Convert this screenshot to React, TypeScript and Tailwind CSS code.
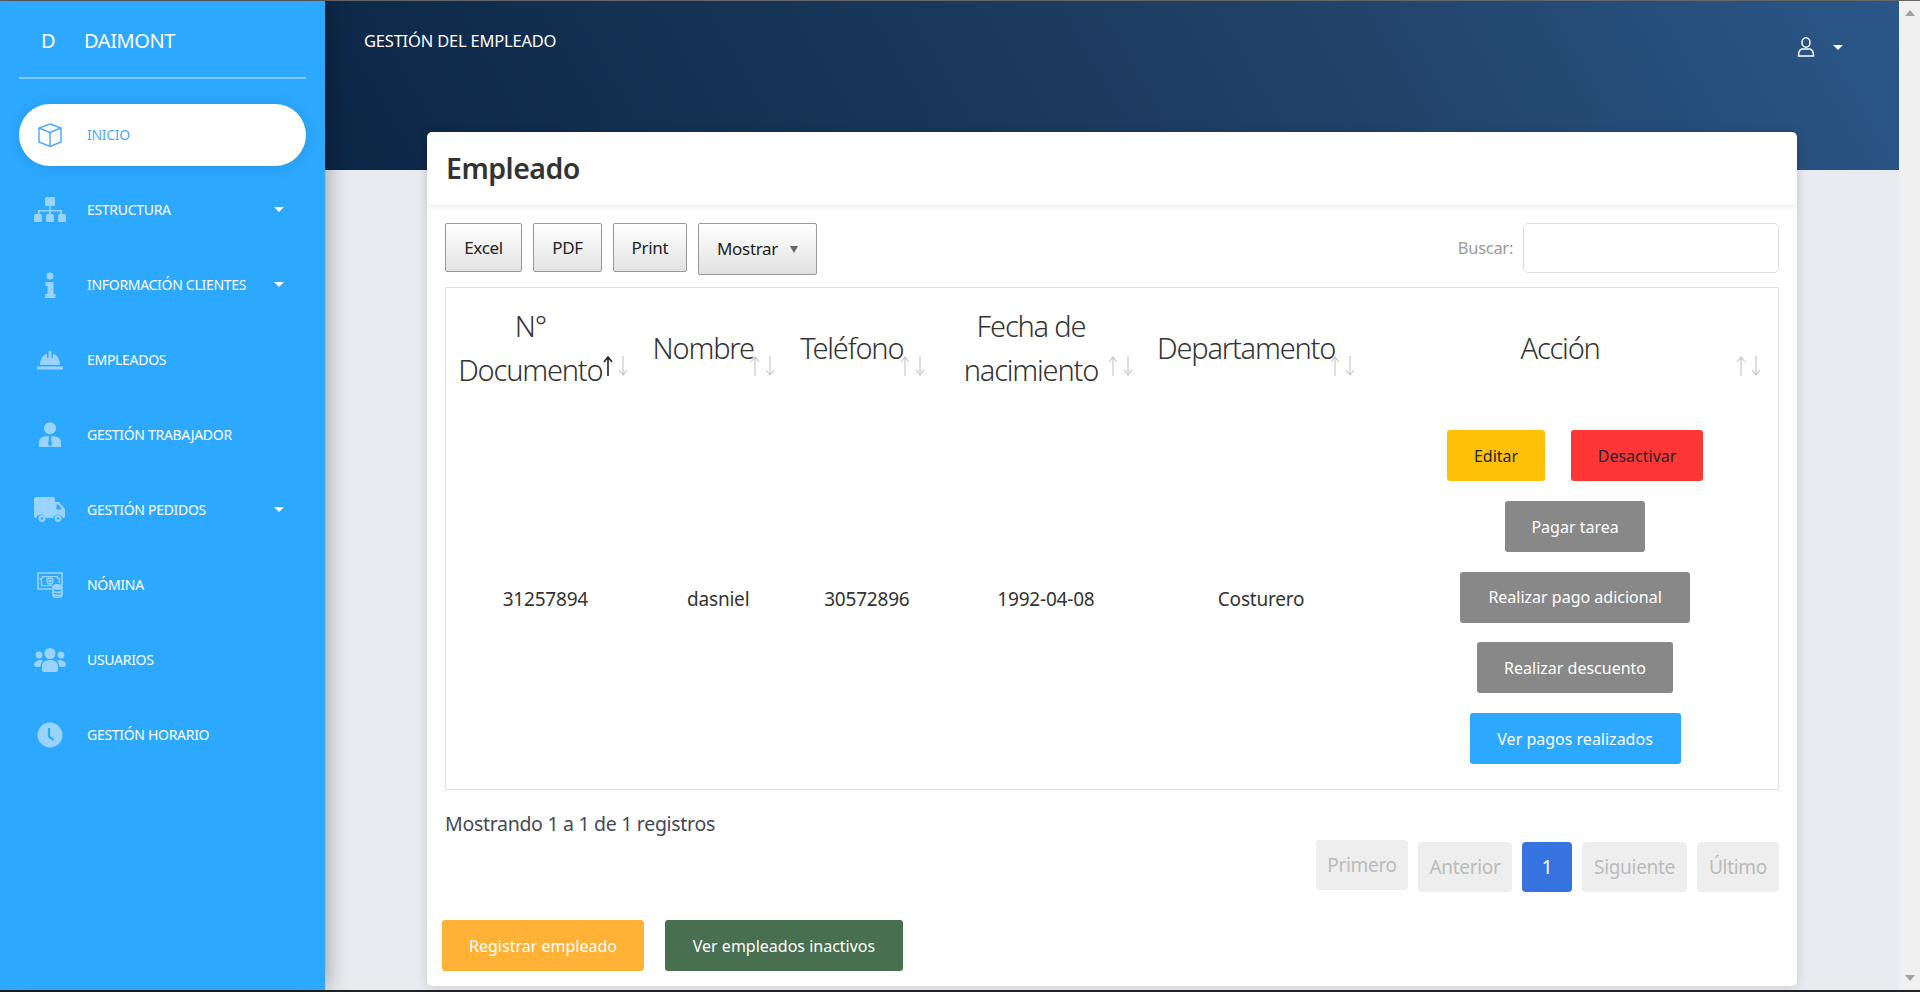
import { ReactNode } from 'react';

const ui = "font-['Noto_Sans',sans-serif]";

function CubeIcon() {
  return (
    <svg width="26" height="26" viewBox="0 0 26 26" fill="none" stroke="currentColor" strokeWidth="1.5">
      <path d="M13 2 L24 6 V20 L13 24.5 L2 20 V6 Z" />
      <path d="M2 6 L13 10.5 L24 6 M13 10.5 V24.5" />
    </svg>
  );
}

function HierarchyIcon() {
  return (
    <svg width="32" height="26" viewBox="0 0 32 26" fill="currentColor">
      <rect x="11" y="0" width="10" height="9" rx="1.5" />
      <path d="M15.2 9h1.6v4H28v5h-1.6v-3.4H16.8V18h-1.6v-3.4H5.6V18H4v-5h11.2z" />
      <rect x="0" y="17" width="8" height="8" rx="1.5" />
      <rect x="12" y="17" width="8" height="8" rx="1.5" />
      <rect x="24" y="17" width="8" height="8" rx="1.5" />
    </svg>
  );
}

function InfoIcon() {
  return (
    <svg width="12" height="26" viewBox="0 0 12 26" fill="currentColor">
      <circle cx="6" cy="4" r="3.6" />
      <path d="M1.5 10h8v12h2v4H1v-4h2.5v-8H1.5z" />
    </svg>
  );
}

function HelmetIcon() {
  return (
    <svg width="26" height="20" viewBox="0 0 26 20" fill="currentColor">
      <path d="M3 15C3 9 6 5 10 3.6V8h1.6V1h2.8v7H16V3.6C20 5 23 9 23 15z" />
      <rect x="0" y="16.5" width="26" height="3" />
    </svg>
  );
}

function WorkerIcon() {
  return (
    <svg width="24" height="26" viewBox="0 0 24 26" fill="currentColor">
      <circle cx="12" cy="6.2" r="6" />
      <path d="M8 14.2 L10.6 14 L11 17 L10 22 L12 25 L14 22 L13 17 L13.4 14 L16 14.2 C20 14.6 23 16.4 23 20 V25 H1 V20 C1 16.4 4 14.6 8 14.2Z" />
    </svg>
  );
}

function TruckIcon() {
  return (
    <svg width="32" height="26" viewBox="0 0 32 26" fill="currentColor">
      <path d="M2 0h17c1 0 2 1 2 2v3h4l6 7v7c0 1-.5 2-1 2h-1.200a5 5 0 0 0-9.600 0h-7.400a5 5 0 0 0-9.600 0H1.500C.500 21 0 20 0 19V2C0 1 1 0 2 0z" />
      <path d="M22.500 7.500v5H28l-3.600-5z" fill="#2ca8ff" />
      <circle cx="8" cy="21.500" r="3.400" />
      <circle cx="24" cy="21.500" r="3.400" />
      <circle cx="8" cy="21.500" r="1.300" fill="#2ca8ff" />
      <circle cx="24" cy="21.500" r="1.300" fill="#2ca8ff" />
    </svg>
  );
}

function PayrollIcon() {
  return (
    <svg width="26" height="26" viewBox="0 0 26 26" fill="none" stroke="currentColor" strokeWidth="1.4">
      <path d="M15 17H1V1h24v12" strokeWidth="1.6" />
      <path d="M15 13.600H4.500V10C4.500 8 3.600 7 3.600 7c1.400 0 2-1 2-2.400h14.600c0 1.400.800 2.400 2.200 2.400v4" />
      <circle cx="13" cy="9" r="3" />
      <circle cx="13" cy="9" r="1" fill="currentColor" />
      <ellipse cx="20.500" cy="15" rx="4.600" ry="2.200" fill="currentColor" />
      <path d="M16 15v8c0 1.300 2 2.400 4.500 2.400S25 24.300 25 23v-8M16 18c0 1.300 2 2.400 4.500 2.400S25 19.300 25 18M16 21c0 1.300 2 2.400 4.500 2.400S25 22.300 25 21" strokeWidth="1.600" />
    </svg>
  );
}

function UsersIcon() {
  return (
    <svg width="32" height="24" viewBox="0 0 32 24" fill="currentColor">
      <circle cx="16" cy="5.500" r="5.500" />
      <path d="M16 12c5 0 8 2.500 8 6v4c0 1-1 2-2 2H10c-1 0-2-1-2-2v-4c0-3.500 3-6 8-6z" />
      <circle cx="5" cy="7" r="3.400" />
      <circle cx="27" cy="7" r="3.400" />
      <path d="M7.500 12C4 12 0 13.500 0 16.500c0 1.500 1 2.500 2.500 2.500h4c.2-3 1.200-5.300 3-6.500-.6-.3-1.200-.5-2-.5zM24.500 12c3.500 0 7.500 1.500 7.500 4.500 0 1.500-1 2.500-2.500 2.500h-4c-.2-3-1.200-5.300-3-6.500.6-.3 1.200-.5 2-.5z" />
    </svg>
  );
}

function ClockIcon() {
  return (
    <svg width="26" height="26" viewBox="0 0 26 26">
      <circle cx="13" cy="13" r="12.500" fill="currentColor" />
      <path d="M12 6v8.500l4.500 3.500" fill="none" stroke="#2ca8ff" strokeWidth="2.200" />
    </svg>
  );
}

function UserOutline() {
  return (
    <svg width="18" height="20" viewBox="0 0 18 20" fill="none" stroke="white" strokeWidth="1.500">
      <ellipse cx="9" cy="5.500" rx="4" ry="4.700" />
      <path d="M5 12 H13 C15 12.500 16.500 15 16.500 19 H1.500 C1.500 15 3 12.500 5 12Z" />
    </svg>
  );
}

function Caret() {
  return <span className="h-0 w-0 border-x-[5px] border-t-[5px] border-x-transparent border-t-white" />;
}

const menu: { label: string; icon: ReactNode; caret?: boolean }[] = [
  { label: 'Estructura', icon: <HierarchyIcon />, caret: true },
  { label: 'Información clientes', icon: <InfoIcon />, caret: true },
  { label: 'Empleados', icon: <HelmetIcon /> },
  { label: 'Gestión trabajador', icon: <WorkerIcon /> },
  { label: 'Gestión pedidos', icon: <TruckIcon />, caret: true },
  { label: 'Nómina', icon: <PayrollIcon /> },
  { label: 'Usuarios', icon: <UsersIcon /> },
  { label: 'Gestión horario', icon: <ClockIcon /> },
];

function Sidebar() {
  return (
    <aside className="relative z-10 flex w-[325px] shrink-0 flex-col bg-[#2ca8ff] shadow-[0_0_22px_rgba(0,0,0,0.4)]">
      <div className="mx-[19px] flex h-[78px] items-center border-b-2 border-[#80c9ff] pt-[3px] text-white">
        <span className="ml-[22px] w-[43px] text-[20px]">D</span>
        <span className="text-[20px] tracking-[-0.4px]">DAIMONT</span>
      </div>
      <nav className="mt-[25px] flex flex-col">
        <a className="mx-[19px] flex h-[62px] items-center rounded-[31px] bg-white text-[#4fa9fb] shadow-[0_1px_15px_rgba(0,0,0,0.1)]">
          <span className="flex w-[68px] justify-center pr-[6px]">
            <CubeIcon />
          </span>
          <span className="pb-[2px] text-[14px] uppercase tracking-[-0.3px]">Inicio</span>
        </a>
        <div className="mt-[6px] flex flex-col">
          {menu.map((item) => (
            <a key={item.label} className="flex h-[75px] items-center pl-[19px] text-white">
              <span className="flex w-[68px] justify-center pr-[6px] text-[#99d3ff]">{item.icon}</span>
              <span className="text-[14px] uppercase tracking-[-0.3px]">{item.label}</span>
              {item.caret && (
                <span className="ml-auto mr-[41px] flex">
                  <Caret />
                </span>
              )}
            </a>
          ))}
        </div>
      </nav>
    </aside>
  );
}

function SortArrows({ dark }: { dark?: boolean }) {
  return (
    <span className="absolute bottom-[34px] right-[17px] flex gap-[5px]">
      <svg width="10" height="20" viewBox="0 0 10 20" fill="none" stroke={dark ? '#222222' : '#c8c8c8'} strokeWidth={dark ? 1.6 : 1.2}>
        <path d="M5 20V1M1 6l4-5 4 5" />
      </svg>
      <svg width="10" height="20" viewBox="0 0 10 20" fill="none" stroke="#c8c8c8" strokeWidth="1.2">
        <path d="M5 0v19M1 14l4 5 4-5" />
      </svg>
    </span>
  );
}

const headers = [
  { label: 'N° Documento', width: 'w-[199px]', pad: 'px-[6px]' },
  { label: 'Nombre', width: 'w-[147px]', pad: '' },
  { label: 'Teléfono', width: 'w-[150px]', pad: '' },
  { label: 'Fecha de nacimiento', width: 'w-[208px]', pad: '' },
  { label: 'Departamento', width: 'w-[222px]', pad: '' },
  { label: 'Acción', width: 'w-[406px]', pad: '' },
];

function ActionButton({ className, children }: { className: string; children: ReactNode }) {
  return (
    <button className={`flex h-[51px] items-center justify-center rounded-[3px] text-[16px] ${className}`}>
      {children}
    </button>
  );
}

function EmployeeTable() {
  return (
    <table className="mt-[12px] w-[1334px] table-fixed border-collapse border border-[#dee2e6]">
      <thead>
        <tr className="h-[122px]">
          {headers.map((h, i) => (
            <th
              key={h.label}
              className={`relative ${h.width} pb-[2px] pr-[30px] text-center text-[29px] font-light leading-[44px] tracking-[-1.2px] text-[#333333]`}
            >
              <span className={`block ${h.pad}`}>{h.label}</span>
              <SortArrows dark={i === 0} />
            </th>
          ))}
        </tr>
      </thead>
      <tbody>
        <tr className="h-[380px] text-center text-[19px] tracking-[-0.2px] text-[#333333]">
          <td className="pb-[1px]">31257894</td>
          <td className="pb-[1px]">dasniel</td>
          <td className="pb-[1px]">30572896</td>
          <td className="pb-[1px]">1992-04-08</td>
          <td className="pb-[1px]">Costurero</td>
          <td>
            <div className="flex flex-col items-center gap-[19.7px] pb-[4px] tracking-normal">
              <div className="flex gap-[26px]">
                <ActionButton className="w-[98px] bg-[#ffc107] text-[#212529]">Editar</ActionButton>
                <ActionButton className="w-[132px] bg-[#ff3636] text-[#212529]">Desactivar</ActionButton>
              </div>
              <ActionButton className="w-[140px] bg-[#888888] text-white">Pagar tarea</ActionButton>
              <ActionButton className="w-[230px] bg-[#888888] text-white">Realizar pago adicional</ActionButton>
              <ActionButton className="w-[196px] bg-[#888888] text-white">Realizar descuento</ActionButton>
              <ActionButton className="w-[211px] bg-[#2ca8ff] text-white">Ver pagos realizados</ActionButton>
            </div>
          </td>
        </tr>
      </tbody>
    </table>
  );
}

function ToolButton({ className, children }: { className: string; children: ReactNode }) {
  return (
    <button
      className={`flex items-center justify-center rounded-[2px] border border-[#999999] bg-gradient-to-b from-white to-[#e2e2e2] text-[17px] tracking-[-0.3px] text-[#222222] ${className}`}
    >
      {children}
    </button>
  );
}

const pages = [
  { label: 'Anterior', width: 'w-[94px]' },
  { label: '1', width: 'w-[50px]', active: true },
  { label: 'Siguiente', width: 'w-[105px]' },
  { label: 'Último', width: 'w-[82px]' },
];

export default function App() {
  return (
    <div className={`flex h-[992px] w-[1920px] flex-col overflow-hidden bg-[#e9ebf0] ${ui}`}>
      <div className="h-px bg-[#666666]" />
      <div className="flex min-h-0 flex-1">
        <Sidebar />
        <main className="flex min-w-0 flex-1 flex-col">
          <header className="flex h-[169px] shrink-0 items-start justify-between bg-[linear-gradient(60deg,#0c2646_0%,#204065_60%,#2a5788_100%)] pl-[39px] pr-[56px] text-white">
            <h2 className="mt-[29px] text-[16.5px] uppercase leading-[22px] tracking-[-0.2px]">Gestión del empleado</h2>
            <div className="mt-[36px] flex items-center gap-[18px]">
              <UserOutline />
              <Caret />
            </div>
          </header>
          <section className="relative mx-[102px] -mt-[38px] h-[854px] rounded-[5px] bg-white px-[18px] shadow-[0_1px_12px_rgba(0,0,0,0.14)]">
            <div className="-mx-[18px] flex h-[73px] items-center rounded-t-[5px] px-[19px] shadow-[0_2px_4px_rgba(0,0,0,0.08)]">
              <h1 className="text-[28.5px] font-semibold tracking-[-0.5px] text-[#333333]">Empleado</h1>
            </div>
            <div className="mt-[18px] flex items-start">
              <div className="flex items-start gap-[11px]">
                <ToolButton className="h-[49px] w-[77px]">Excel</ToolButton>
                <ToolButton className="h-[49px] w-[69px]">PDF</ToolButton>
                <ToolButton className="h-[49px] w-[74px]">Print</ToolButton>
                <ToolButton className="h-[52px] w-[119px] gap-[12px]">
                  Mostrar
                  <span className="h-0 w-0 border-x-[4px] border-t-[7px] border-x-transparent border-t-[#666666]" />
                </ToolButton>
              </div>
              <label className="ml-auto flex items-center gap-[10px] text-[16.5px] tracking-[-0.3px] text-[#999999]">
                Buscar:
                <input className="h-[50px] w-[256px] rounded-[5px] border border-[#dddddd] bg-white" />
              </label>
            </div>
            <EmployeeTable />
            <p className="mt-[20px] text-[19.5px] leading-[27px] tracking-[-0.3px] text-[#44495a]">Mostrando 1 a 1 de 1 registros</p>
            <div className="mt-[3px] flex items-start justify-end gap-[10px]">
              <button className="flex h-[50px] w-[92px] items-center justify-center rounded-[4px] bg-[#eeeeee] text-[19px] tracking-[-0.3px] text-[#bbbbbb]">
                Primero
              </button>
              {pages.map((p) => (
                <button
                  key={p.label}
                  className={`mt-[2px] flex h-[50px] ${p.width} items-center justify-center rounded-[4px] text-[19px] tracking-[-0.3px] ${p.active ? 'bg-[#3673de] text-white' : 'bg-[#eeeeee] text-[#bbbbbb]'}`}
                >
                  {p.label}
                </button>
              ))}
            </div>
            <div className="-ml-[3px] mt-[28px] flex gap-[21px] text-[16px] text-white">
              <button className="h-[51px] w-[202px] rounded-[3px] bg-[#ffb236]">Registrar empleado</button>
              <button className="h-[51px] w-[238px] rounded-[3px] bg-[#486f4f]">Ver empleados inactivos</button>
            </div>
          </section>
        </main>
        <div className="flex w-[21px] shrink-0 flex-col items-center justify-between bg-[#f0f0f0] py-[9px]">
          <span className="h-0 w-0 border-x-[5px] border-b-[6px] border-x-transparent border-b-[#a3a3a3]" />
          <span className="h-0 w-0 border-x-[5px] border-t-[6px] border-x-transparent border-t-[#a3a3a3]" />
        </div>
      </div>
      <div className="h-0.5 bg-[#222222]" />
    </div>
  );
}
